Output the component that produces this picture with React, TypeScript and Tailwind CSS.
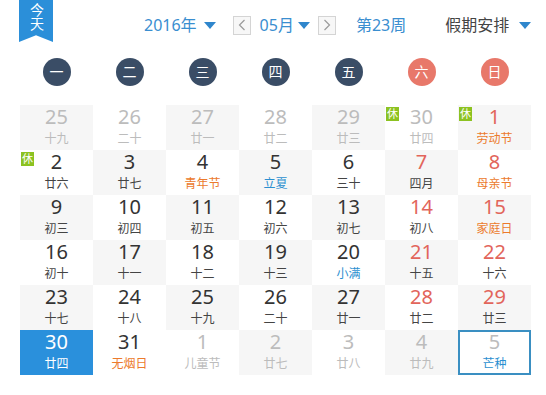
import React from "react";

type Cell = {
  d: string;
  l: string;
  kind?: "p" | "today";
  red?: boolean;
  lc?: "o" | "b" | "p";
  rest?: boolean;
  mark?: boolean;
  white?: boolean;
};

const rows: Cell[][] = [
  [
    { d: "25", l: "十九", kind: "p" },
    { d: "26", l: "二十", kind: "p" },
    { d: "27", l: "廿一", kind: "p" },
    { d: "28", l: "廿二", kind: "p" },
    { d: "29", l: "廿三", kind: "p" },
    { d: "30", l: "廿四", kind: "p", rest: true },
    { d: "1", l: "劳动节", red: true, lc: "o", rest: true },
  ],
  [
    { d: "2", l: "廿六", rest: true },
    { d: "3", l: "廿七" },
    { d: "4", l: "青年节", lc: "o" },
    { d: "5", l: "立夏", lc: "b" },
    { d: "6", l: "三十" },
    { d: "7", l: "四月", red: true },
    { d: "8", l: "母亲节", red: true, lc: "o" },
  ],
  [
    { d: "9", l: "初三" },
    { d: "10", l: "初四" },
    { d: "11", l: "初五" },
    { d: "12", l: "初六" },
    { d: "13", l: "初七" },
    { d: "14", l: "初八", red: true },
    { d: "15", l: "家庭日", red: true, lc: "o" },
  ],
  [
    { d: "16", l: "初十" },
    { d: "17", l: "十一" },
    { d: "18", l: "十二" },
    { d: "19", l: "十三" },
    { d: "20", l: "小满", lc: "b" },
    { d: "21", l: "十五", red: true },
    { d: "22", l: "十六", red: true },
  ],
  [
    { d: "23", l: "十七" },
    { d: "24", l: "十八" },
    { d: "25", l: "十九" },
    { d: "26", l: "二十" },
    { d: "27", l: "廿一" },
    { d: "28", l: "廿二", red: true },
    { d: "29", l: "廿三", red: true },
  ],
  [
    { d: "30", l: "廿四", kind: "today" },
    { d: "31", l: "无烟日", lc: "o", white: true },
    { d: "1", l: "儿童节", kind: "p" },
    { d: "2", l: "廿七", kind: "p" },
    { d: "3", l: "廿八", kind: "p" },
    { d: "4", l: "廿九", kind: "p" },
    { d: "5", l: "芒种", kind: "p", lc: "b", mark: true },
  ],
];

const weekdays = ["一", "二", "三", "四", "五", "六", "日"];

function Caret({ color, className = "" }: { color: string; className?: string }) {
  return (
    <svg width="12" height="7" viewBox="0 0 12 7" className={`mt-[1px] ${className}`}>
      <polygon points="0,0 12,0 6,7" fill={color} />
    </svg>
  );
}

function NavBtn({ dir }: { dir: "l" | "r" }) {
  return (
    <div className="w-[18px] h-[19px] border border-[#d4d4d4] bg-[#f7f7f7] flex items-center justify-center">
      <svg width="8" height="12" viewBox="0 0 8 12">
        <polyline
          points={dir === "l" ? "6.5,1 1.5,6 6.5,11" : "1.5,1 6.5,6 1.5,11"}
          fill="none"
          stroke="#9a9a9a"
          strokeWidth="1.2"
        />
      </svg>
    </div>
  );
}

export default function App() {
  return (
    <div
      className="relative w-[546px] h-[395px] bg-white overflow-hidden"
      style={{ fontFamily: '"Noto Sans", "Noto Sans CJK SC", sans-serif' }}
    >
      {/* bookmark */}
      <div className="absolute left-[19px] top-0 w-[34px] h-[42px] bg-[#2b8fd9] [clip-path:polygon(0_0,100%_0,100%_100%,50%_84%,0_100%)] flex justify-center pt-[3px] text-white">
        <div className="[writing-mode:vertical-rl] text-[14px] leading-[16px]">今天</div>
      </div>

      {/* header */}
      <div className="h-[50px] flex items-center pl-[144px] text-[16px] text-[#3a8ed0]">
        <div className="flex items-center">
          <div className="leading-[20px]">2016年</div>
          <Caret color="#2f86cc" className="ml-[7px]" />
        </div>
        <div className="ml-[17px]">
          <NavBtn dir="l" />
        </div>
        <div className="flex items-center ml-[9px]">
          <div className="leading-[20px]">05月</div>
          <Caret color="#2f86cc" className="ml-[4px]" />
        </div>
        <div className="ml-[8px]">
          <NavBtn dir="r" />
        </div>
        <div className="ml-[20px] leading-[20px]">第23周</div>
        <div className="flex items-center ml-[39px] text-[#444]">
          <div className="leading-[20px]">假期安排</div>
          <Caret color="#2f86cc" className="ml-[10px]" />
        </div>
      </div>

      {/* weekdays */}
      <div className="ml-[20px] w-[511px] grid grid-cols-7 h-[55px] pt-[8px]">
        {weekdays.map((w, i) => (
          <div key={w} className="flex justify-center">
            <div
              className={`w-[28px] h-[28px] rounded-full flex items-center justify-center text-white text-[14px] leading-[16px] ${
                i >= 5 ? "bg-[#e8786a]" : "bg-[#3a4d66]"
              }`}
            >
              {w}
            </div>
          </div>
        ))}
      </div>

      {/* days */}
      <div className="ml-[20px] w-[511px] grid grid-cols-7">
        {rows.map((row, r) =>
          row.map((c, ci) => {
            const gray = (r + ci) % 2 === 0 && !c.white;
            const today = c.kind === "today";
            const prev = c.kind === "p";
            let bg = gray ? "bg-[#f6f6f6]" : "bg-white";
            if (today) bg = "bg-[#2a90dc]";
            if (c.mark) bg = "bg-white";
            const numColor = today
              ? "text-white"
              : prev
              ? "text-[#bcbcbc]"
              : c.red
              ? "text-[#e2655b]"
              : "text-[#333333]";
            let lunarColor = today
              ? "text-white"
              : prev
              ? "text-[#bcbcbc]"
              : "text-[#444444]";
            if (c.lc === "o") lunarColor = "text-[#ec7a2c]";
            if (c.lc === "b") lunarColor = "text-[#2b8fd0]";
            return (
              <div
                key={`${r}-${ci}`}
                className={`relative h-[45px] flex flex-col items-center ${bg} ${
                  c.mark ? "border-2 border-[#3a8fc2] pt-0" : "pt-[1px]"
                }`}
              >
                {c.rest && (
                  <div className="absolute left-[1px] top-[2px] w-[13px] h-[14px] bg-[#8cc221] text-white text-[11px] leading-[14px] flex items-center justify-center">
                    休
                  </div>
                )}
                <div className={`text-[20px] leading-[21px] ${numColor} ${c.mark ? "-mt-[1px]" : ""}`}>
                  {c.d}
                </div>
                <div className={`mt-[4px] text-[12px] leading-[16px] ${lunarColor}`}>{c.l}</div>
              </div>
            );
          })
        )}
      </div>
    </div>
  );
}
